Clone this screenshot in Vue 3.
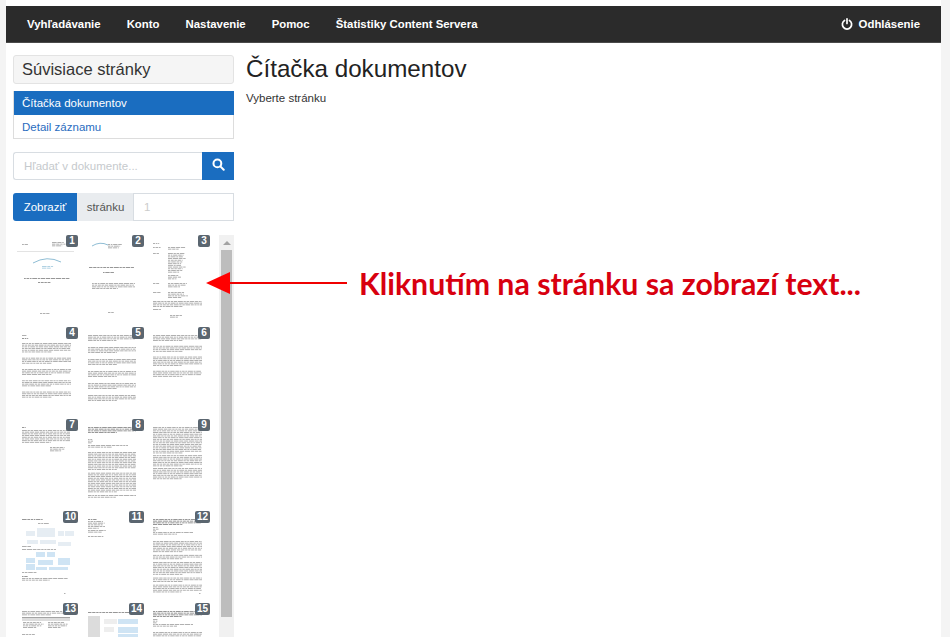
<template>
  <div class="page">
    <nav class="topbar">
      <a v-for="item in navItems" :key="item" class="topbar__link">{{ item }}</a>
      <a class="topbar__link topbar__logout">
        <svg class="topbar__power" viewBox="0 0 14 14" width="12" height="12" fill="none" stroke="#fff" stroke-width="2" stroke-linecap="round">
          <path d="M4.1 2.9a5.4 5.4 0 1 0 5.8 0" />
          <path d="M7 1v5.4" />
        </svg>
        Odhlásenie
      </a>
    </nav>

    <div class="content">
      <aside class="sidebar">
        <div class="panel-title">Súvisiace stránky</div>
        <div class="links">
          <a class="links__item links__item--active">Čítačka dokumentov</a>
          <a class="links__item">Detail záznamu</a>
        </div>

        <div class="search">
          <div class="search__input">Hľadať v dokumente...</div>
          <button class="search__btn" type="button">
            <svg viewBox="0 0 14 14" width="13" height="13" fill="none" stroke="#fff" stroke-width="2.2" stroke-linecap="round">
              <circle cx="5.8" cy="5.8" r="4.2" />
              <path d="M9 9l3.6 3.6" />
            </svg>
          </button>
        </div>

        <div class="goto">
          <button class="goto__btn" type="button">Zobraziť</button>
          <span class="goto__label">stránku</span>
          <span class="goto__input">1</span>
        </div>

        <div class="thumbs">
          <div class="thumbs__grid">
            <div v-for="thumb in thumbs" :key="thumb.page" class="thumb">
              <svg class="thumb__page" viewBox="0 0 66 92" width="66" height="92">
                <rect v-for="(r, i) in thumb.rects" :key="i" :x="r[0]" :y="r[1]" :width="r[2]" :height="r[3]" :fill="r[4]" />
                <path v-if="thumb.arc" :d="thumb.arc" fill="none" stroke="#8fbdd4" stroke-width="1" />
              </svg>
              <span class="thumb__badge">{{ thumb.page }}</span>
            </div>
          </div>
          <div class="scrollbar">
            <div class="scrollbar__up"></div>
            <div class="scrollbar__thumb"></div>
          </div>
        </div>
      </aside>

      <main class="main">
        <h1 class="main__title">Čítačka dokumentov</h1>
        <p class="main__text">Vyberte stránku</p>
      </main>
    </div>

    <svg class="arrow" viewBox="0 0 150 28" width="150" height="28">
      <path d="M24 13h117" stroke="#f00000" stroke-width="2" />
      <path d="M0 13L24 2v22z" fill="#ff0000" />
    </svg>
    <div class="callout">Kliknutím na stránku sa zobrazí text...</div>
  </div>
</template>

<script setup>
const navItems = ['Vyhľadávanie', 'Konto', 'Nastavenie', 'Pomoc', 'Štatistiky Content Servera']

const GRAY = '#a8a8a8'
const DARK = '#8c8c8c'
const BLUE = '#cfe4f4'
const PALE = '#e6edf3'
const STEP = 1.7

// small repeatable noise so the fake words differ from line to line
let seed = 7
function noise() {
  seed = (seed * 31 + 11) % 101
  return seed / 101
}

// one line of fake words
function words(x, y, w, color) {
  const out = []
  let left = x
  const end = x + w
  while (left < end - 0.5) {
    const len = Math.min(1.5 + noise() * 4, end - left)
    out.push([left, y, len, 0.9, color])
    left += len + 0.7
  }
  return out
}

// block of text lines, x/y inside the 66x92 cell
function lines(x, y, w, n, color = GRAY, step = STEP) {
  let out = []
  for (let i = 0; i < n; i++) {
    const rag = w < 30 ? 0.65 + noise() * 0.35 : 1
    const width = i === n - 1 && n > 1 ? w * 0.6 : w * rag
    out = out.concat(words(x, y + i * step, width, color))
  }
  return out
}

function paragraphs(x, y, w, sizes, gap = 4) {
  let out = []
  let top = y
  for (const n of sizes) {
    out = out.concat(lines(x, top, w, n))
    top += n * STEP + gap
  }
  return out
}

function boxes(list, color = BLUE) {
  return list.map(([x, y, w, h]) => [x, y, w, h, color])
}

const thumbs = [
  {
    page: 1,
    arc: 'M16 28Q30 20 44 27',
    rects: [
      ...lines(5, 9, 8, 1),
      ...lines(35, 7, 17, 3),
      [0, 16, 57, 0.8, '#dcdcdc'],
      ...lines(25, 31, 16, 2, '#a9cde0'),
      ...lines(7, 43, 46, 1, DARK),
      ...lines(21, 47, 17, 1, DARK),
      ...lines(23, 78, 10, 1)
    ]
  },
  {
    page: 2,
    arc: 'M9 11Q17 6 25 10',
    rects: [
      ...lines(25, 9, 18, 3),
      ...lines(6, 32, 46, 1, DARK),
      ...lines(20, 37, 16, 1, DARK),
      ...lines(9, 48, 43, 4),
      ...lines(25, 77, 8, 1)
    ]
  },
  {
    page: 3,
    rects: [
      ...lines(4, 8, 8, 1),
      ...lines(4, 12, 10, 1),
      ...lines(19, 12, 19, 2),
      ...lines(4, 18, 10, 1),
      ...lines(19, 18, 20, 12),
      ...lines(19, 40, 14, 3),
      ...lines(4, 48, 8, 1),
      ...lines(19, 48, 20, 3),
      ...lines(4, 57, 8, 1),
      ...lines(19, 57, 22, 4),
      ...lines(4, 66, 49, 4),
      ...lines(4, 74, 9, 1),
      ...lines(21, 80, 15, 2)
    ]
  },
  {
    page: 4,
    rects: [
      ...lines(5, 8, 6, 1),
      ...lines(5, 11, 8, 1, DARK),
      ...paragraphs(5, 16, 49, [6, 4, 4, 4, 4], 4.5)
    ]
  },
  {
    page: 5,
    rects: paragraphs(5, 8, 48, [4, 4, 4, 4, 4, 4], 5.2)
  },
  {
    page: 6,
    rects: paragraphs(4, 8, 49, [4, 4, 6, 4], 4)
  },
  {
    page: 7,
    rects: [
      ...lines(5, 8, 5, 1, DARK),
      ...lines(5, 11, 48, 8),
      ...lines(33, 28, 20, 3)
    ]
  },
  {
    page: 8,
    rects: [
      ...lines(5, 8, 48, 4, DARK),
      ...lines(5, 20, 6, 3),
      ...lines(5, 26, 40, 2),
      ...paragraphs(5, 33, 48, [11, 12, 2], 2)
    ]
  },
  {
    page: 9,
    rects: paragraphs(4, 8, 49, [16, 7, 7], 1)
  },
  {
    page: 10,
    rects: [
      ...lines(5, 8, 28, 1, DARK),
      ...lines(21, 12, 16, 1),
      ...boxes([[9, 20, 9, 5], [20, 17, 18, 9], [41, 20, 6, 5], [48, 20, 9, 5], [41, 31, 13, 4], [10, 29, 11, 4], [23, 29, 16, 4]], PALE),
      ...lines(5, 35, 13, 1),
      ...lines(5, 38, 34, 1),
      ...boxes([[19, 41, 9, 5], [30, 41, 8, 5], [9, 47, 9, 5], [9, 53, 9, 6], [21, 49, 15, 5], [41, 47, 12, 7], [19, 56, 11, 3], [32, 56, 19, 3]]),
      ...lines(5, 61, 16, 1),
      ...lines(5, 65, 8, 1, DARK),
      ...lines(5, 67, 46, 2),
      ...lines(47, 82, 2, 1)
    ]
  },
  {
    page: 11,
    rects: [
      ...lines(5, 8, 11, 1, DARK),
      ...lines(5, 10, 18, 5),
      ...lines(5, 19, 24, 2),
      ...lines(5, 25, 21, 1)
    ]
  },
  {
    page: 12,
    rects: [
      ...lines(4, 8, 49, 4, DARK),
      ...lines(4, 16, 6, 3),
      ...lines(4, 21, 40, 2),
      ...paragraphs(4, 30, 49, [7, 3, 8, 3, 5], 2),
      ...lines(50, 82, 2, 1)
    ]
  },
  {
    page: 13,
    rects: [
      ...lines(5, 8, 48, 3),
      [5, 14, 48, 0.8, DARK],
      ...boxes([[5, 15, 48, 3]], '#dddddd'),
      ...lines(6, 19, 22, 4),
      ...lines(31, 19, 21, 4),
      ...lines(5, 31, 16, 1),
      ...lines(5, 35, 48, 2)
    ]
  },
  {
    page: 14,
    rects: [
      ...lines(5, 9, 44, 1, DARK),
      ...boxes([[5, 13, 12, 21]], '#dcdcdc'),
      ...boxes([[35, 16, 20, 5], [35, 24, 20, 6], [35, 31, 20, 3]]),
      ...boxes([[21, 16, 13, 5], [21, 24, 10, 5]], '#eeeeee')
    ]
  },
  {
    page: 15,
    rects: [
      ...lines(4, 8, 49, 4, DARK),
      ...lines(4, 16, 6, 3),
      ...lines(4, 21, 40, 2),
      ...lines(4, 29, 49, 4)
    ]
  }
]
</script>

<style scoped>
.page {
  position: relative;
  height: 637px;
  margin: 0 9px 0 6px;
  padding-top: 6px;
  box-sizing: border-box;
  overflow: hidden;
  background: #fff;
  font-family: "Liberation Sans", Arial, sans-serif;
  font-size: 11.5px;
  color: #333;
}

.topbar {
  display: flex;
  align-items: center;
  height: 37px;
  padding: 0 21px 0 8px;
  background: #2b2b2b;
  border-bottom: 1px solid #4a4a4a;
  box-sizing: border-box;
}

.topbar__link {
  padding: 0 13px;
  color: #fff;
  font-size: 11.4px;
  font-weight: 700;
  white-space: nowrap;
}

.topbar__logout {
  display: flex;
  align-items: center;
  gap: 6px;
  margin-left: auto;
  padding: 0;
}

.content {
  display: flex;
  gap: 12px;
  padding: 12px 7px 0;
}

.sidebar {
  display: flex;
  flex-direction: column;
  flex: 0 0 221px;
  width: 221px;
}

.panel-title {
  height: 29px;
  padding-left: 8px;
  line-height: 27px;
  font-size: 16.5px;
  background: #f5f5f5;
  border: 1px solid #e3e3e3;
  border-radius: 3px;
  box-sizing: border-box;
}

.links {
  display: flex;
  flex-direction: column;
  height: 48px;
  margin-top: 7px;
  border: 1px solid #ddd;
  border-top: 0;
  box-sizing: border-box;
}

.links__item {
  height: 24px;
  padding-left: 8px;
  line-height: 24px;
  color: #2a6cc0;
}

.links__item--active {
  margin: 0 -1px 0 0;
  color: #fff;
  background: #1a6dc0;
}

.search {
  display: flex;
  height: 28px;
  margin-top: 13px;
}

.search__input {
  flex: 1;
  padding-left: 10px;
  line-height: 26px;
  color: #c6cacd;
  border: 1px solid #d8dde2;
  border-right: 0;
  border-radius: 3px 0 0 3px;
}

.search__btn {
  display: flex;
  align-items: center;
  justify-content: center;
  width: 32px;
  padding: 0 0 3px;
  background: #1a6dc0;
  border: 0;
}

.goto {
  display: flex;
  height: 28px;
  margin-top: 13px;
}

.goto__btn {
  width: 64px;
  padding: 0;
  font: inherit;
  color: #fff;
  background: #1a6dc0;
  border: 0;
  border-radius: 3px 0 0 3px;
}

.goto__label {
  width: 57px;
  padding-left: 1px;
  line-height: 28px;
  text-align: center;
  color: #555;
  background: #e9ecef;
  border-right: 1px solid #d8dde2;
  box-sizing: border-box;
}

.goto__input {
  flex: 1;
  padding-left: 10px;
  line-height: 26px;
  color: #ccc;
  border: 1px solid #d8dde2;
  border-left: 0;
}

.thumbs {
  display: flex;
  justify-content: space-between;
  margin-top: 14px;
  padding-left: 4px;
}

.thumbs__grid {
  display: grid;
  grid-template-columns: repeat(3, 66px);
  grid-auto-rows: 92px;
}

.thumb {
  position: relative;
}

.thumb__page {
  display: block;
  filter: blur(0.4px);
}

.thumb__badge {
  position: absolute;
  top: 0;
  right: 5px;
  min-width: 8px;
  height: 12px;
  padding: 0 2px;
  line-height: 12px;
  text-align: center;
  font-size: 10px;
  font-weight: 700;
  color: #fff;
  background: #5b6670;
  border-radius: 2px;
}

.scrollbar {
  flex: 0 0 15px;
  height: 402px;
  background: #f1f1f1;
}

.scrollbar__up {
  position: relative;
  height: 15px;
}

.scrollbar__up::after {
  content: "";
  position: absolute;
  top: 6px;
  left: 4px;
  border: 4px solid transparent;
  border-top: 0;
  border-bottom: 4px solid #a3a3a3;
}

.scrollbar__thumb {
  width: 11px;
  height: 367px;
  margin-left: 2px;
  background: #bdbdbd;
}

.main {
  flex: 1;
}

.main__title {
  margin: 0;
  font-size: 24.2px;
  font-weight: 400;
  line-height: 28px;
  color: #222;
}

.main__text {
  margin: 7px 0 0;
  line-height: 17px;
}

.arrow {
  position: absolute;
  top: 270px;
  left: 200px;
}

.callout {
  position: absolute;
  top: 264px;
  left: 353px;
  font-family: Lato, "Open Sans", sans-serif;
  font-size: 30.25px;
  font-weight: 700;
  line-height: 38px;
  white-space: nowrap;
  color: #d8000f;
}
</style>

<style>
body {
  background: #f4f4f4;
}
</style>
